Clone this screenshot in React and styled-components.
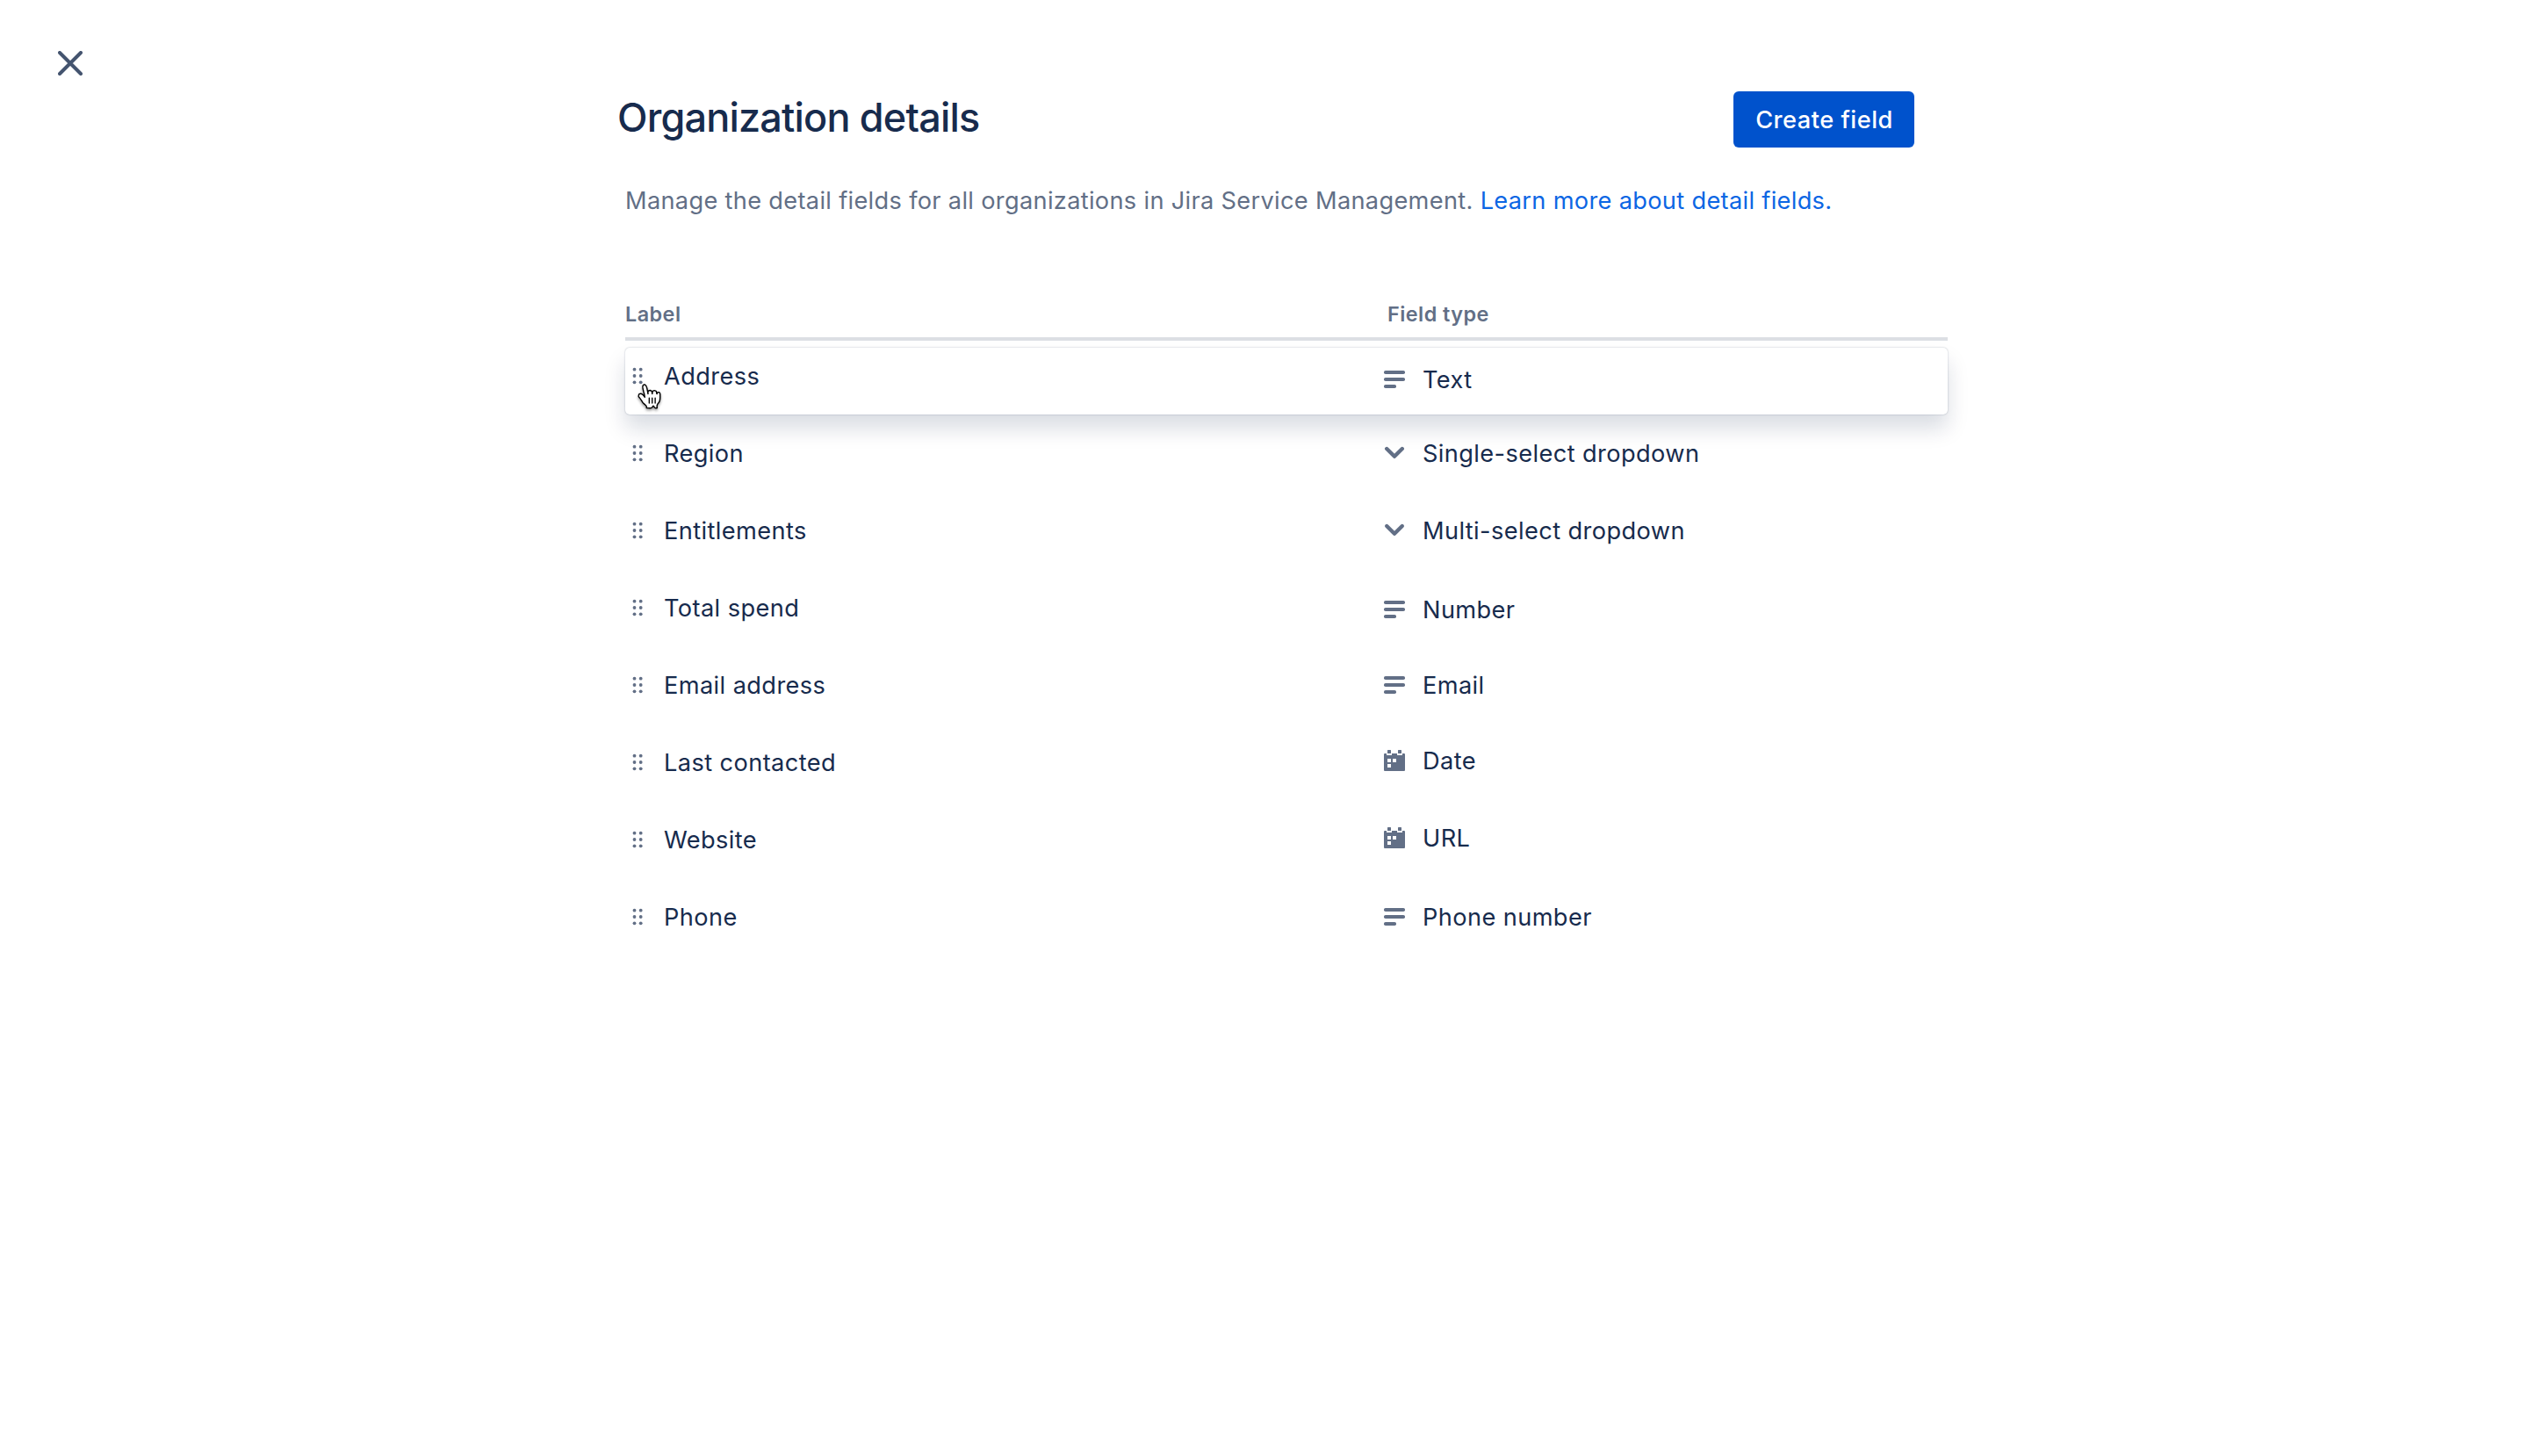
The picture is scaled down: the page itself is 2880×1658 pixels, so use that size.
import styled, { createGlobalStyle } from 'styled-components';

const GlobalStyle = createGlobalStyle`
  body {
    margin: 0;
    background: #ffffff;
    font-family: Inter, "Liberation Sans", sans-serif;
    color: #172b4d;
  }
`

const Page = styled.div`
  display: flex;
  min-height: 100vh;
`

const Side = styled.aside`
  width: 704px;
  box-sizing: border-box;
  padding: 58px 66px;
`

const CloseButton = styled.button`
  display: flex;
  padding: 0;
  border: none;
  background: none;
  color: #44546f;
  cursor: pointer;
`

const Main = styled.main`
  width: 1514px;
  padding-top: 104px;
`

const Header = styled.header`
  display: flex;
  justify-content: space-between;
  align-items: flex-start;
  padding-right: 38px;
`

const Title = styled.h1`
  margin: 0 0 0 -1px;
  font-size: 45px;
  line-height: 60px;
  font-weight: 500;
  letter-spacing: -0.82px;
`

const CreateButton = styled.button`
  width: 206px;
  height: 64px;
  padding: 0 0 0 1px;
  border: none;
  border-radius: 6px;
  background: #0052cc;
  color: #ffffff;
  font-family: inherit;
  font-size: 27.2px;
  font-weight: 500;
  letter-spacing: 0.5px;
`

const Description = styled.p`
  margin: 41px 0 93px;
  padding-left: 8px;
  font-size: 27.2px;
  line-height: 40px;
  letter-spacing: 0.32px;
  white-space: nowrap;
  color: #626f86;
`

const Link = styled.a`
  color: #0c66e4;
  text-decoration: none;
`

const Table = styled.div`
  margin-left: 8px;
`

const TableHead = styled.div`
  display: grid;
  grid-template-columns: 868px 1fr;
  padding-bottom: 10px;
  margin-bottom: 8px;
  border-bottom: 4px solid #dcdfe4;
  font-size: 23.4px;
  line-height: 32px;
  font-weight: 600;
  letter-spacing: 0.45px;
  color: #626f86;
`

const Row = styled.div`
  position: relative;
  display: grid;
  grid-template-columns: 864px 1fr;
  align-items: center;
  height: ${(props) => (props.$lifted ? 76 : 88)}px;
  border-radius: 5px;
  box-shadow: ${(props) =>
    props.$lifted ? '0 16px 24px rgba(9, 30, 66, 0.15), 0 0 2px rgba(9, 30, 66, 0.31)' : 'none'};
`

// $nudge moves the content up or down from the middle of the row
const Cell = styled.div`
  display: flex;
  align-items: center;
  gap: ${(props) => props.$gap}px;
  margin-top: ${(props) => props.$nudge * 2}px;
`

const CellText = styled.span`
  padding-top: 2px;
  font-size: 27.2px;
  line-height: 40px;
  letter-spacing: 0.4px;
`

const Icon = styled.svg`
  display: block;
  flex: none;
  color: #626f86;
`

const Cursor = styled.svg`
  position: absolute;
  left: 11px;
  top: 38px;
  filter: drop-shadow(0 2px 1.5px rgba(0, 0, 0, 0.4));
`

const DragHandle = () => (
  <Icon width="28" height="28" viewBox="0 0 28 28" fill="currentColor">
    {[6.7, 14, 21.3].map((y) => (
      <g key={y}>
        <circle cx="10.5" cy={y} r="1.9" />
        <circle cx="17.7" cy={y} r="1.9" />
      </g>
    ))}
  </Icon>
)

const LinesIcon = () => (
  <Icon width="24" height="24" viewBox="0 0 24 24" fill="currentColor">
    <rect y="2" width="24" height="4" rx="1.8" />
    <rect y="10" width="24" height="4" rx="1.8" />
    <rect y="18" width="14" height="4" rx="1.8" />
  </Icon>
)

const ChevronIcon = () => (
  <Icon width="24" height="24" viewBox="0 0 24 24" fill="none" stroke="currentColor" strokeWidth="4.4" strokeLinecap="round" strokeLinejoin="round">
    <path d="M3.2 7l8.8 8.8L20.8 7" />
  </Icon>
)

const CalendarIcon = () => (
  <Icon width="24" height="24" viewBox="0 0 24 24" fill="currentColor">
    <rect x="4" width="4" height="4" rx=".5" />
    <rect x="16" width="4" height="4" rx=".5" />
    <path
      fillRule="evenodd"
      d="M1 4h2v2h6V4h6v2h6V4h2a1 1 0 0 1 1 1v18a1 1 0 0 1-1 1H1a1 1 0 0 1-1-1V5a1 1 0 0 1 1-1zM4 10v4h4v-4zM10 10v4h4v-4zM4 16v4h4v-4z"
    />
  </Icon>
)

const HandCursor = () => (
  <Cursor width="34" height="34" viewBox="6 6 20 20">
    <path
      fill="#fff"
      stroke="#000"
      strokeWidth=".85"
      strokeLinejoin="round"
      d="m11.3 20.4c-.3-.4-.6-1.1-1.2-2-.3-.5-1.2-1.5-1.5-1.9-.2-.4-.2-.6-.1-1 .1-.6.7-1.1 1.4-1.1.5 0 1 .4 1.4.7.2.2.5.6.7.8.2.2.2.3.4.5.2.3.3.5.2.1-.1-.5-.2-1.3-.4-2.1-.1-.6-.2-.7-.3-1.1-.1-.5-.2-.8-.3-1.3-.1-.3-.2-1.1-.3-1.5-.1-.5-.1-1.4.3-1.8.3-.3.9-.4 1.3-.2.5.3.8 1 .9 1.3.2.5.4 1.2.5 2 .2 1 .5 2.5.5 2.8 0-.4-.1-1.1 0-1.5.1-.3.3-.7.7-.8.3-.1.6-.1.9-.1.3.1.6.3.8.5.4.6.4 1.9.4 1.8.1-.4.1-1.2.3-1.6.1-.2.5-.4.7-.5.3-.1.7-.1 1 0 .2 0 .6.3.7.5.2.3.3 1.3.4 1.7 0 .1.1-.4.3-.7.4-.6 1.8-.8 1.9.6v1.3.3.8c0 .5-.1 1.4-.2 1.9 0 .3-.3 1-.6 1.5 0 0-1.1 1.2-1.2 1.8-.1.6-.1.6-.1 1s.1.9.1.9-.8.1-1.2 0c-.4-.1-.9-.8-1-1.1-.2-.3-.5-.3-.7 0-.2.4-.7 1.1-1.1 1.1-.7.1-2.1 0-3.1 0 0 0 .2-1-.2-1.4-.3-.3-.8-.8-1.1-1.1z"
    />
    <path stroke="#000" strokeWidth=".8" strokeLinecap="round" d="M19.6 20.7v-3.4M17.6 20.7v-3.4M15.6 20.7v-3.4" />
  </Cursor>
)

const icons = {
  lines: LinesIcon,
  chevron: ChevronIcon,
  calendar: CalendarIcon,
}

const fields = [
  { label: 'Address', type: 'Text', icon: 'lines', labelNudge: -6, typeNudge: -2, lifted: true },
  { label: 'Region', type: 'Single-select dropdown', icon: 'chevron' },
  { label: 'Entitlements', type: 'Multi-select dropdown', icon: 'chevron' },
  { label: 'Total spend', type: 'Number', icon: 'lines', typeNudge: 2 },
  { label: 'Email address', type: 'Email', icon: 'lines' },
  { label: 'Last contacted', type: 'Date', icon: 'calendar', typeNudge: -2 },
  { label: 'Website', type: 'URL', icon: 'calendar', typeNudge: -2 },
  { label: 'Phone', type: 'Phone number', icon: 'lines' },
]

const FieldRow = ({ label, type, icon, labelNudge = 0, typeNudge = 0, lifted = false }) => {
  const TypeIcon = icons[icon]
  return (
    <Row $lifted={lifted}>
      <Cell $gap={16} $nudge={labelNudge}>
        <DragHandle />
        <CellText>{label}</CellText>
      </Cell>
      <Cell $gap={20} $nudge={typeNudge}>
        <TypeIcon />
        <CellText>{type}</CellText>
      </Cell>
      {lifted && <HandCursor />}
    </Row>
  )
}

const App = () => {
  return (
    <Page>
      <GlobalStyle />
      <Side>
        <CloseButton aria-label="Close">
          <svg width="28" height="28" viewBox="0 0 28 28" fill="none" stroke="currentColor" strokeWidth="4" strokeLinecap="round">
            <path d="M2 2l24 24M26 2L2 26" />
          </svg>
        </CloseButton>
      </Side>
      <Main>
        <Header>
          <Title>Organization details</Title>
          <CreateButton>Create field</CreateButton>
        </Header>
        <Description>
          Manage the detail fields for all organizations in Jira Service Management.{' '}
          <Link href="#">Learn more about detail fields.</Link>
        </Description>
        <Table>
          <TableHead>
            <span>Label</span>
            <span>Field type</span>
          </TableHead>
          {fields.map((field) => (
            <FieldRow key={field.label} {...field} />
          ))}
        </Table>
      </Main>
    </Page>
  )
}

export default App
